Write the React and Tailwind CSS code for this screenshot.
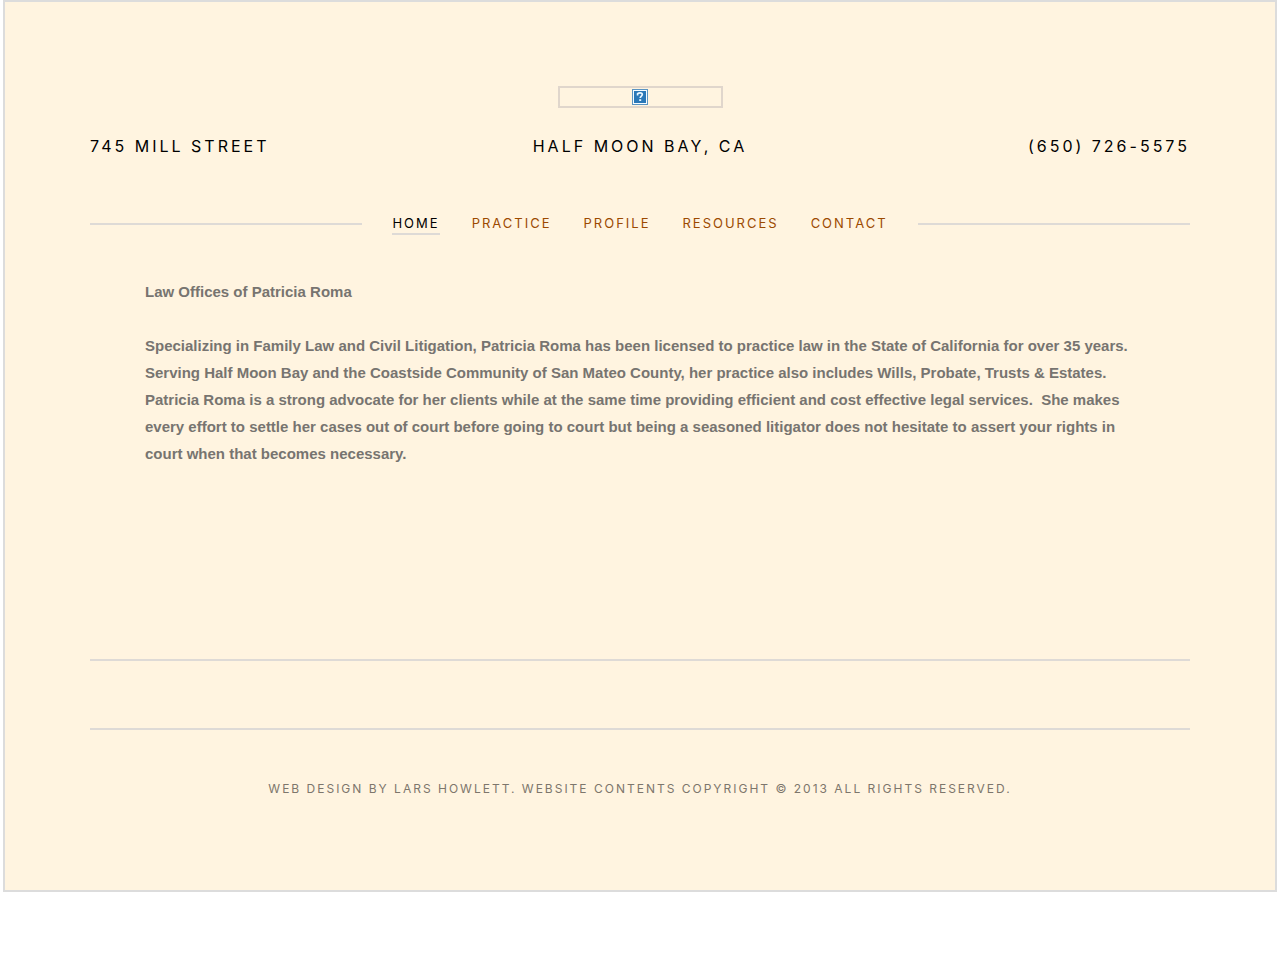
const links = ["Home", "Practice", "Profile", "Resources", "Contact"];

function LogoPlaceholder() {
  return (
    <a
      href="#home"
      aria-label="Law Offices of Patricia Roma"
      className="mx-auto flex h-[22px] w-[165px] items-center justify-center border-2 border-[#e0d6cc]"
    >
      <svg width="16" height="16" viewBox="0 0 16 16" aria-hidden="true">
        <rect width="16" height="16" fill="#5a94c2" />
        <rect x="1" y="1" width="14" height="14" fill="#f4fbff" />
        <rect x="2" y="2" width="12" height="12" fill="#2a78b8" />
        <path
          d="M5.6 6.4V4.6C6.4 4 7.2 3.9 8.1 3.9C9.6 3.9 10.3 4.6 10.3 5.6C10.3 7 8.3 7.1 8.2 9"
          fill="none"
          stroke="#e8f6ff"
          strokeWidth="1.7"
        />
        <rect x="7.2" y="10.2" width="2" height="1.8" fill="#e8f6ff" />
      </svg>
    </a>
  );
}

function Navigation() {
  return (
    <div className="mt-[55px] flex items-center gap-[30px]">
      <div className="h-0.5 flex-1 bg-[#dedad6]" />
      <nav className="flex gap-8 text-[13px] leading-5 tracking-[2px] uppercase">
        {links.map((label, i) => (
          <a
            key={label}
            href={"#" + label.toLowerCase()}
            aria-current={i === 0 ? "page" : undefined}
            className={
              i === 0
                ? "border-b-2 border-[#dedad6] text-black"
                : "border-b-2 border-transparent text-[#9c4a00]"
            }
          >
            {label}
          </a>
        ))}
      </nav>
      <div className="h-0.5 flex-1 bg-[#dedad6]" />
    </div>
  );
}

export default function App() {
  return (
    <div className="mx-[3px] border-2 border-[#dcdcdc] bg-[#fff4e0] px-[85px] pt-[84px] pb-[91px] font-['Inter',sans-serif]">
      <header>
        <LogoPlaceholder />
        <div className="mt-[26px] grid grid-cols-3 text-base leading-6 tracking-[3px] text-black uppercase">
          <p>745 Mill Street</p>
          <p className="text-center">Half Moon Bay, CA</p>
          <p className="text-right">(650) 726-5575</p>
        </div>
        <Navigation />
      </header>
      <main className="min-h-[424px] px-[55px] pt-[43px] font-['Liberation_Sans',Arial,sans-serif] text-[15px] leading-[27px] font-bold text-[#777470]">
        <h1>Law Offices of Patricia Roma</h1>
        <p className="mt-[27px]">
          Specializing in Family Law and Civil Litigation, Patricia Roma has been licensed to practice law in the State of California for over 35 years. Serving Half Moon Bay and the Coastside Community of San Mateo County, her practice also includes Wills, Probate, Trusts &amp; Estates. Patricia Roma is a strong advocate for her clients while at the same time providing efficient and cost effective legal services.&nbsp; She makes every effort to settle her cases out of court before going to court but being a seasoned litigator does not hesitate to assert your rights in court when that becomes necessary.
        </p>
      </main>
      <footer>
        <div className="h-[71px] border-y-2 border-[#dedad6]" />
        <p className="mt-[49px] text-center text-xs leading-5 tracking-[2px] text-[#7d766c] uppercase">
          Web design by Lars Howlett. Website contents copyright © 2013 All Rights Reserved.
        </p>
      </footer>
    </div>
  );
}
